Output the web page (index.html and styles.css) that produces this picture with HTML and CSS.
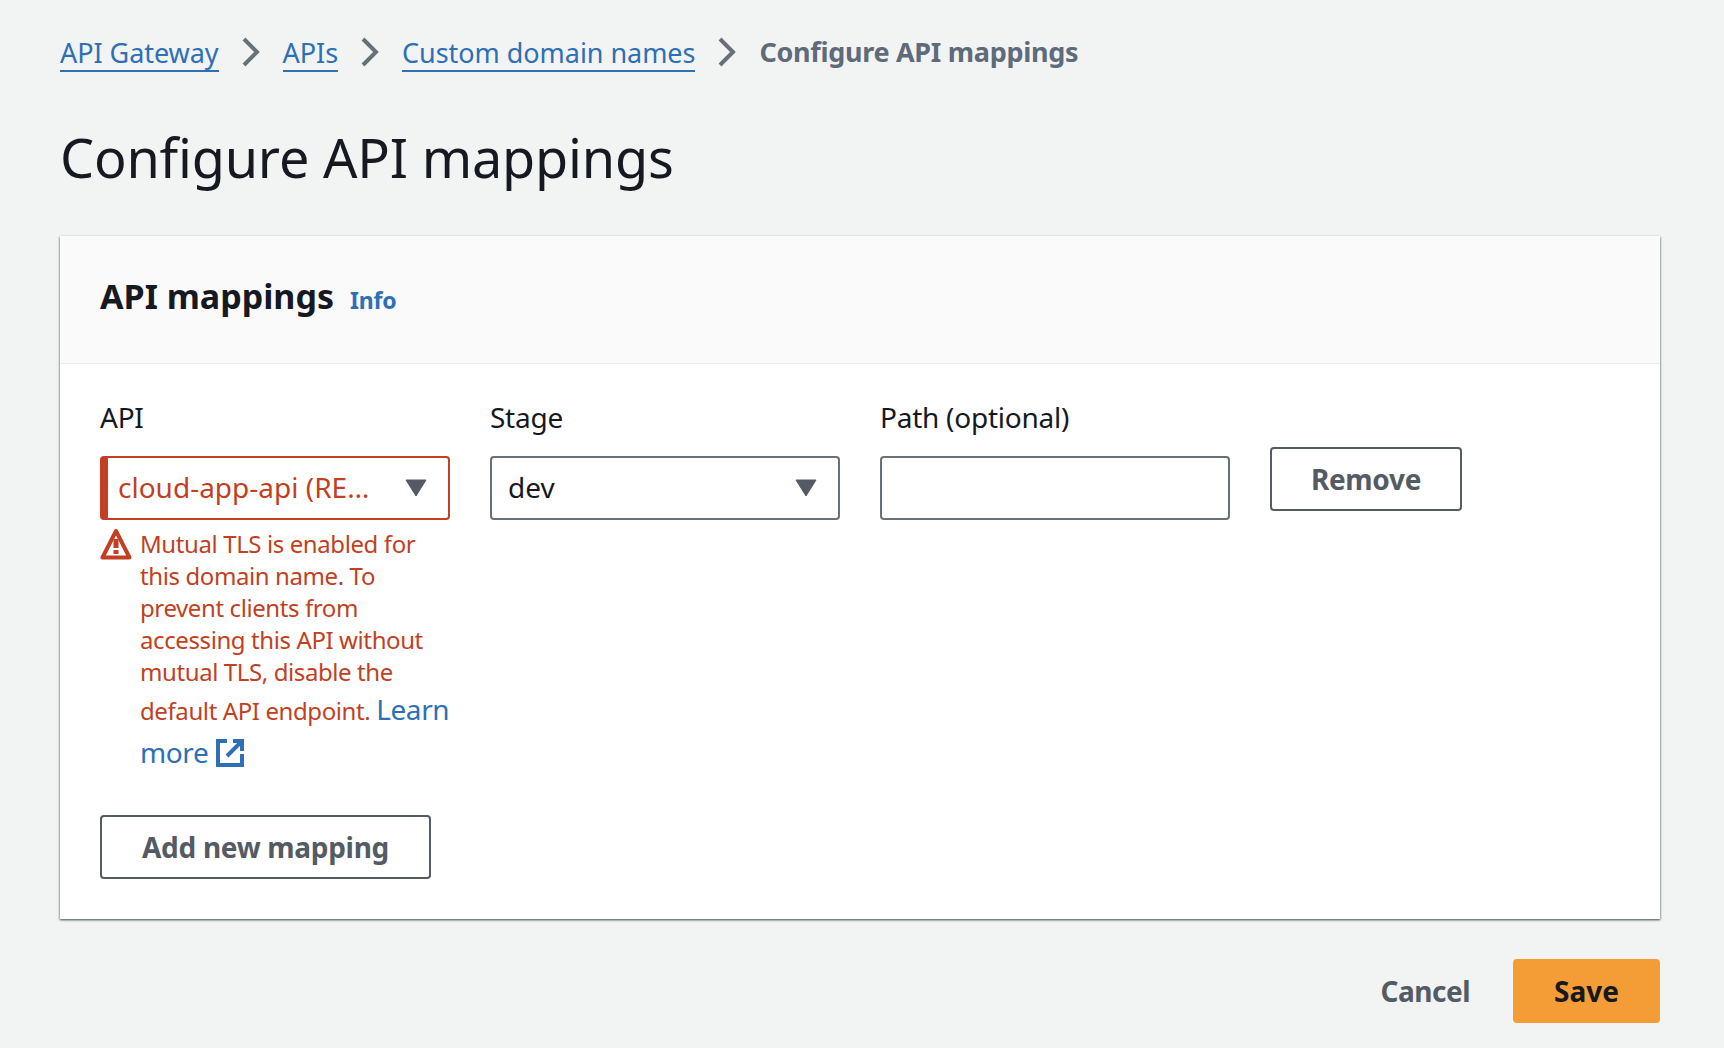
FILE: index.html
```html
<!DOCTYPE html>
<html lang="en">
<head>
  <meta charset="UTF-8" />
  <title>Configure API mappings</title>
  <link rel="stylesheet" href="styles.css">
</head>
<body>

  <nav class="breadcrumbs">
    <a href="#">API Gateway</a>
    <svg class="chevron" viewBox="0 0 20 32"><path d="M3 3l13 13L3 29" /></svg>
    <a href="#">APIs</a>
    <svg class="chevron" viewBox="0 0 20 32"><path d="M3 3l13 13L3 29" /></svg>
    <a href="#">Custom domain names</a>
    <svg class="chevron" viewBox="0 0 20 32"><path d="M3 3l13 13L3 29" /></svg>
    <span class="current">Configure API mappings</span>
  </nav>

  <h1>Configure API mappings</h1>

  <section class="card">
    <header class="card-header">
      <h2>API mappings</h2>
      <a class="info" href="#">Info</a>
    </header>

    <div class="card-body">
      <div class="mapping-row">
        <div class="field">
          <div class="label">API</div>
          <div class="select invalid">
            <span class="select-value">cloud-app-api (RE…</span>
            <svg class="caret" viewBox="0 0 22 18"><path d="M1 1h20L11 17z" /></svg>
          </div>
          <div class="error">
            <svg class="warn" viewBox="0 0 32 32"><path class="warn-line" d="M16 3L2.5 29.5h27z" /><path class="warn-mark" d="M13.5 11h5v9h-5zM13.5 22h5v4h-5z" /></svg>
            <p>Mutual TLS is enabled for this domain name. To prevent clients from accessing this API without mutual TLS, disable the default API endpoint. <a href="#">Learn more <svg class="external" viewBox="0 0 28 28"><path d="M11 2H2v24h24V15" /><path d="M17 2h9v10M25 3L11 17" /></svg></a></p>
          </div>
        </div>

        <div class="field">
          <div class="label">Stage</div>
          <div class="select">
            <span class="select-value">dev</span>
            <svg class="caret" viewBox="0 0 22 18"><path d="M1 1h20L11 17z" /></svg>
          </div>
        </div>

        <div class="field">
          <label class="label" for="path">Path (optional)</label>
          <input class="text-input" id="path" type="text" />
        </div>

        <button class="btn btn-remove" type="button">Remove</button>
      </div>

      <button class="btn btn-add" type="button">Add new mapping</button>
    </div>
  </section>

  <div class="actions">
    <button class="btn-link" type="button">Cancel</button>
    <button class="btn-primary" type="button">Save</button>
  </div>

</body>
</html>
```

FILE: styles.css
```css
/* Page */
body {
  margin: 0;
  padding: 31px 64px 24px 60px;
  background-color: #f2f3f3;
  color: #16191f;
  font-family: "Noto Sans", "Open Sans", sans-serif;
  font-size: 28px;
}

a {
  color: #2e6fb5;
  text-decoration: none;
}

/* Breadcrumbs */
.breadcrumbs {
  display: flex;
  align-items: center;
  height: 42px;
  font-size: 27px;
  line-height: 38px;
}

.breadcrumbs a {
  border-bottom: 2px solid #2e6fb5;
  height: 37px;
  line-height: 40px;
  letter-spacing: -0.05px;
}

.chevron {
  width: 20px;
  height: 32px;
  margin: 0 22px;
  fill: none;
  stroke: #687078;
  stroke-width: 4;
}

.current {
  color: #5f6b7a;
  font-weight: 700;
  letter-spacing: -0.3px;
}

h1 {
  margin: 47px 0 42px;
  font-size: 54px;
  line-height: 74px;
  font-weight: 400;
  letter-spacing: -0.2px;
}

/* Card */
.card {
  background-color: #fff;
  box-shadow: 0 1px 2px 0 rgba(0, 28, 36, 0.6), 1px 1px 2px 0 rgba(0, 28, 36, 0.15), -1px 1px 2px 0 rgba(0, 28, 36, 0.15);
}

.card-header {
  display: flex;
  align-items: baseline;
  gap: 16px;
  height: 128px;
  box-sizing: border-box;
  padding: 36px 40px 0;
  background-color: #fafafa;
  border-bottom: 1px solid #eaeded;
}

h2 {
  margin: 0;
  font-size: 34px;
  line-height: 48px;
  font-weight: 700;
}

.info {
  font-size: 23px;
  font-weight: 700;
  letter-spacing: -0.2px;
}

.card-body {
  padding: 34px 40px 40px;
}

.mapping-row {
  display: flex;
  align-items: flex-start;
  gap: 40px;
}

.field {
  width: 350px;
}

.label {
  display: block;
  font-size: 28px;
  line-height: 38px;
  margin-bottom: 20px;
  letter-spacing: -0.25px;
}

.select,
.text-input {
  display: flex;
  align-items: center;
  justify-content: space-between;
  box-sizing: border-box;
  width: 350px;
  height: 64px;
  padding: 0 21px 0 16px;
  background-color: #fff;
  border: 2px solid #687078;
  border-radius: 4px;
  font: inherit;
}

.select-value {
  padding-bottom: 2px;
}

.select.invalid {
  padding-left: 10px;
  border-color: #c23f22;
  border-left-width: 8px;
  color: #c23f22;
}

.caret {
  width: 22px;
  height: 18px;
  fill: #545b64;
  stroke: #545b64;
}

/* Validation message */
.error {
  display: flex;
  gap: 8px;
  margin-top: 8px;
  color: #c23f22;
  font-size: 24px;
  line-height: 32px;
  letter-spacing: -0.4px;
}

.warn {
  flex: none;
  width: 32px;
  height: 32px;
}

.warn-line {
  fill: none;
  stroke: #c23f22;
  stroke-width: 4;
  stroke-linejoin: round;
}

.warn-mark {
  fill: #c23f22;
}

.error p {
  margin: 0;
}

.error a {
  font-size: 28px;
  line-height: 43px;
}

.external {
  width: 28px;
  height: 28px;
  margin-left: 1px;
  vertical-align: -4px;
  fill: none;
  stroke: #2e6fb5;
  stroke-width: 4;
}

/* Buttons */
.btn {
  box-sizing: border-box;
  height: 64px;
  background-color: #fff;
  border: 2px solid #545b64;
  border-radius: 4px;
  color: #545b64;
  font: inherit;
  font-weight: 700;
  letter-spacing: -0.3px;
}

.btn-remove {
  width: 192px;
  margin-top: 49px;
}

.btn-add {
  display: block;
  width: 331px;
  margin-top: 41px;
}

.actions {
  display: flex;
  justify-content: flex-end;
  align-items: center;
  gap: 43px;
  margin-top: 40px;
}

.btn-link {
  padding: 0;
  background: none;
  border: none;
  color: #545b64;
  font: inherit;
  font-weight: 700;
  letter-spacing: -0.5px;
}

.btn-primary {
  width: 147px;
  height: 64px;
  background-color: #f49d37;
  border: none;
  border-radius: 4px;
  color: #16191f;
  font: inherit;
  font-weight: 700;
}
```
